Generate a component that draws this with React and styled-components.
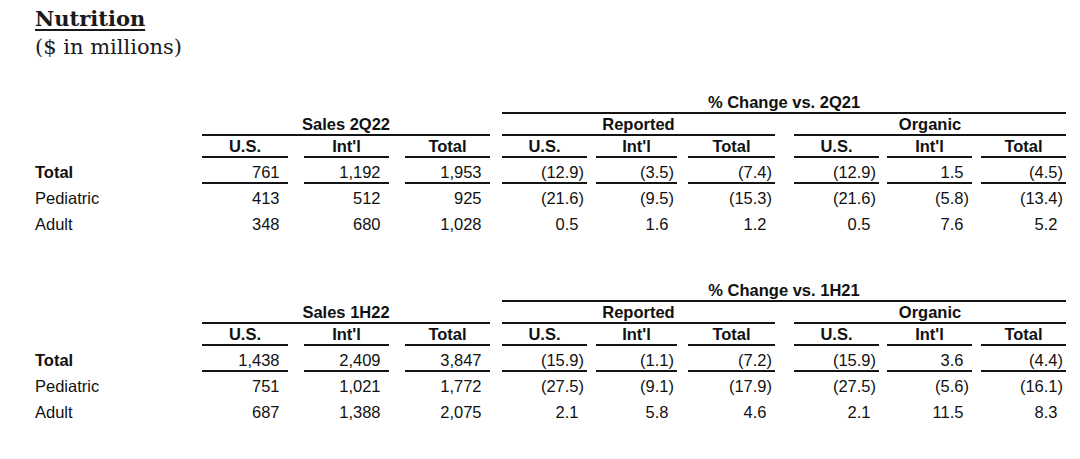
import React from 'react';
import styled, { createGlobalStyle } from 'styled-components';

const GlobalStyle = createGlobalStyle`
  html, body {
    margin: 0;
    padding: 0;
    background: #ffffff;
  }
  body {
    width: 1080px;
    height: 459px;
    overflow: hidden;
    font-family: "Liberation Sans", Arial, sans-serif;
    color: #111111;
  }
`;

/* column geometry: [left, right] of each data column's rule */
const COLS = [
  [202, 288], [304, 389], [405, 490],
  [502, 587], [596, 677], [688, 775],
  [794, 879], [887, 972], [981, 1066],
];
const LABEL_W = 167;
const tracks = COLS.map(([, r], i) => r - (i === 0 ? 202 : COLS[i - 1][1]));
const gaps = COLS.map(([l], i) => l - (i === 0 ? 202 : COLS[i - 1][1]));

const Page = styled.main`
  padding: 4px 0 0 35px;
  display: flex;
  flex-direction: column;
`;

const Title = styled.h1`
  margin: 0;
  font-family: "DejaVu Serif", Georgia, serif;
  font-size: 21px;
  font-weight: 700;
  line-height: 29px;
  color: #1a1a1a;
  text-decoration: underline;
  text-decoration-thickness: 2px;
  text-underline-offset: 3px;
`;

const Subtitle = styled.div`
  font-family: "DejaVu Serif", Georgia, serif;
  font-size: 21px;
  line-height: 29px;
  color: #1a1a1a;
`;

const Grid = styled.section`
  display: grid;
  grid-template-columns: ${LABEL_W}px ${tracks.map((t) => `${t}px`).join(' ')};
  margin-top: ${(p) => p.$top}px;
  font-size: 16.5px;
  width: max-content;
`;

const Blank = styled.div`
  grid-column: ${(p) => p.$span ? `span ${p.$span}` : 'auto'};
`;

const HeadCell = styled.div`
  grid-column: span ${(p) => p.$span || 1};
  margin-left: ${(p) => p.$gap}px;
  line-height: 20px;
  font-weight: 700;
  text-align: center;
  white-space: nowrap;
  border-bottom: 2px solid #151515;
`;

const Label = styled.div`
  padding-top: 4px;
  line-height: 20px;
  border-bottom: 2px solid transparent;
  font-weight: ${(p) => (p.$strong ? 700 : 400)};
  white-space: nowrap;
`;

const Value = styled.div`
  margin-left: ${(p) => p.$gap}px;
  padding: 4px 3px 0 0;
  line-height: 20px;
  text-align: right;
  white-space: nowrap;
  border-bottom: 2px solid ${(p) => (p.$rule ? '#151515' : 'transparent')};
`;

const Pad = styled.span`
  visibility: hidden;
`;

function Num({ v }) {
  return (
    <>
      {v}
      {v.endsWith(')') ? null : <Pad>)</Pad>}
    </>
  );
}

function DataTable({ period, compare, rows, top }) {
  return (
    <Grid $top={top}>
      <Blank $span={4} />
      <HeadCell $span={6} $gap={gaps[3]}>% Change vs. {compare}</HeadCell>

      <Blank />
      <HeadCell $span={3} $gap={gaps[0]}>Sales {period}</HeadCell>
      <HeadCell $span={3} $gap={gaps[3]}>Reported</HeadCell>
      <HeadCell $span={3} $gap={gaps[6]}>Organic</HeadCell>

      <Blank />
      {['U.S.', "Int'l", 'Total', 'U.S.', "Int'l", 'Total', 'U.S.', "Int'l", 'Total'].map((h, i) => (
        <HeadCell key={i} $gap={gaps[i]}>{h}</HeadCell>
      ))}

      {rows.map((row, ri) => (
        <React.Fragment key={row.label}>
          <Label $strong={ri === 0}>{row.label}</Label>
          {row.values.map((v, i) => (
            <Value key={i} $gap={gaps[i]} $rule={ri === 0}>
              <Num v={v} />
            </Value>
          ))}
        </React.Fragment>
      ))}
    </Grid>
  );
}

const Q2 = [
  { label: 'Total', values: ['761', '1,192', '1,953', '(12.9)', '(3.5)', '(7.4)', '(12.9)', '1.5', '(4.5)'] },
  { label: 'Pediatric', values: ['413', '512', '925', '(21.6)', '(9.5)', '(15.3)', '(21.6)', '(5.8)', '(13.4)'] },
  { label: 'Adult', values: ['348', '680', '1,028', '0.5', '1.6', '1.2', '0.5', '7.6', '5.2'] },
];

const H1 = [
  { label: 'Total', values: ['1,438', '2,409', '3,847', '(15.9)', '(1.1)', '(7.2)', '(15.9)', '3.6', '(4.4)'] },
  { label: 'Pediatric', values: ['751', '1,021', '1,772', '(27.5)', '(9.1)', '(17.9)', '(27.5)', '(5.6)', '(16.1)'] },
  { label: 'Adult', values: ['687', '1,388', '2,075', '2.1', '5.8', '4.6', '2.1', '11.5', '8.3'] },
];

export default function App() {
  return (
    <>
      <GlobalStyle />
      <Page>
        <Title>Nutrition</Title>
        <Subtitle>($ in millions)</Subtitle>
        <DataTable period="2Q22" compare="2Q21" rows={Q2} top={30} />
        <DataTable period="1H22" compare="1H21" rows={H1} top={44} />
      </Page>
    </>
  );
}
